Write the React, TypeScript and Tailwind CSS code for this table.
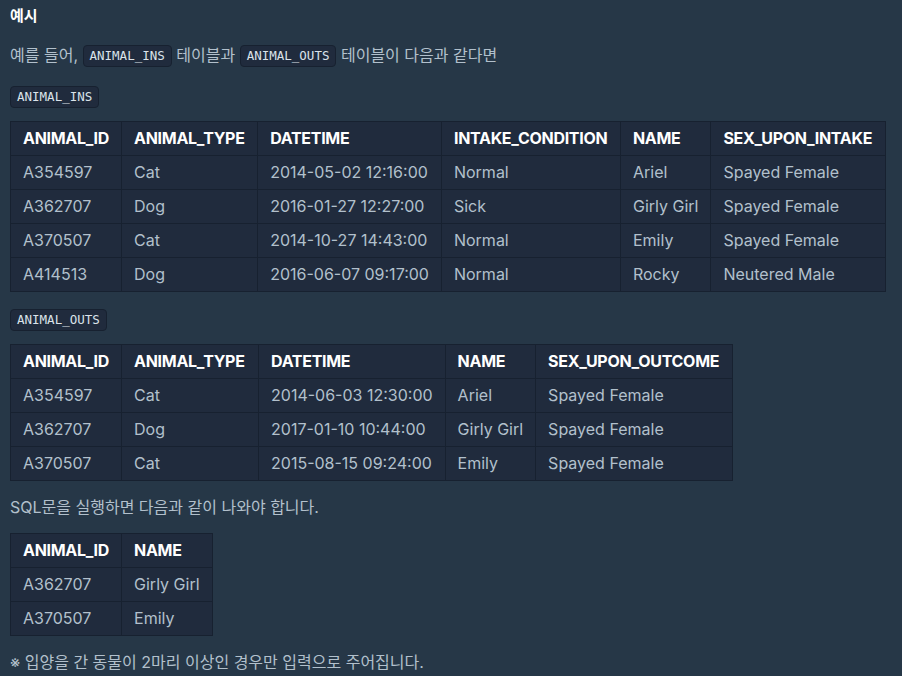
import React from "react";

const font = { fontFamily: 'Inter, "Noto Sans CJK KR", sans-serif' };

function Code({ children }: { children: React.ReactNode }) {
  return (
    <code className="inline-block rounded-[4px] border border-[#172130] bg-[#202b3d] px-[6px] text-[12.5px] leading-[20px] text-[#dbe3ea] [font-family:'DejaVu_Sans_Mono',monospace] align-[1px]">
      {children}
    </code>
  );
}

function Table({ headers, widths, rows }: { headers: string[]; widths: string[]; rows: string[][] }) {
  return (
    <table className="border-collapse bg-[#202b3d] text-[16px] leading-[23px]">
      <thead>
        <tr>
          {headers.map((h, i) => (
            <th key={i} className={`border border-[#172130] px-[12px] py-[5px] text-left font-bold tracking-[-0.3px] text-white whitespace-nowrap ${widths[i]}`}>
              {h}
            </th>
          ))}
        </tr>
      </thead>
      <tbody>
        {rows.map((r, ri) => (
          <tr key={ri}>
            {r.map((c, ci) => (
              <td key={ci} className="border border-[#172130] px-[12px] py-[5px] text-[#b2c0cc] whitespace-nowrap">
                {c}
              </td>
            ))}
          </tr>
        ))}
      </tbody>
    </table>
  );
}

export default function App() {
  return (
    <div className="min-h-[676px] w-[902px] bg-[#263747] pl-[10px] pr-[16px] pt-[4px] text-[16px] leading-[24px] text-[#b2c0cc]" style={font}>
      <div className="font-semibold text-white text-[15px]">예시</div>
      <p className="mt-[15px]">
        예를 들어, <Code>ANIMAL_INS</Code> 테이블과 <Code>ANIMAL_OUTS</Code> 테이블이 다음과 같다면
      </p>
      <p className="mt-[17px]">
        <Code>ANIMAL_INS</Code>
      </p>
      <div className="mt-[13px]">
        <Table
          headers={["ANIMAL_ID", "ANIMAL_TYPE", "DATETIME", "INTAKE_CONDITION", "NAME", "SEX_UPON_INTAKE"]}
          widths={["w-[111px]", "w-[137px]", "w-[183px]", "w-[180px]", "w-[89px]", "w-[176px]"]}
          rows={[
            ["A354597", "Cat", "2014-05-02 12:16:00", "Normal", "Ariel", "Spayed Female"],
            ["A362707", "Dog", "2016-01-27 12:27:00", "Sick", "Girly Girl", "Spayed Female"],
            ["A370507", "Cat", "2014-10-27 14:43:00", "Normal", "Emily", "Spayed Female"],
            ["A414513", "Dog", "2016-06-07 09:17:00", "Normal", "Rocky", "Neutered Male"],
          ]}
        />
      </div>
      <p className="mt-[15px]">
        <Code>ANIMAL_OUTS</Code>
      </p>
      <div className="mt-[13px]">
        <Table
          headers={["ANIMAL_ID", "ANIMAL_TYPE", "DATETIME", "NAME", "SEX_UPON_OUTCOME"]}
          widths={["w-[111px]", "w-[137px]", "w-[185px]", "w-[89px]", "w-[197px]"]}
          rows={[
            ["A354597", "Cat", "2014-06-03 12:30:00", "Ariel", "Spayed Female"],
            ["A362707", "Dog", "2017-01-10 10:44:00", "Girly Girl", "Spayed Female"],
            ["A370507", "Cat", "2015-08-15 09:24:00", "Emily", "Spayed Female"],
          ]}
        />
      </div>
      <p className="mt-[14px]">SQL문을 실행하면 다음과 같이 나와야 합니다.</p>
      <div className="mt-[14px]">
        <Table
          headers={["ANIMAL_ID", "NAME"]}
          widths={["w-[111px]", "w-[88px]"]}
          rows={[
            ["A362707", "Girly Girl"],
            ["A370507", "Emily"],
          ]}
        />
      </div>
      <p className="mt-[14px]">※ 입양을 간 동물이 2마리 이상인 경우만 입력으로 주어집니다.</p>
    </div>
  );
}
